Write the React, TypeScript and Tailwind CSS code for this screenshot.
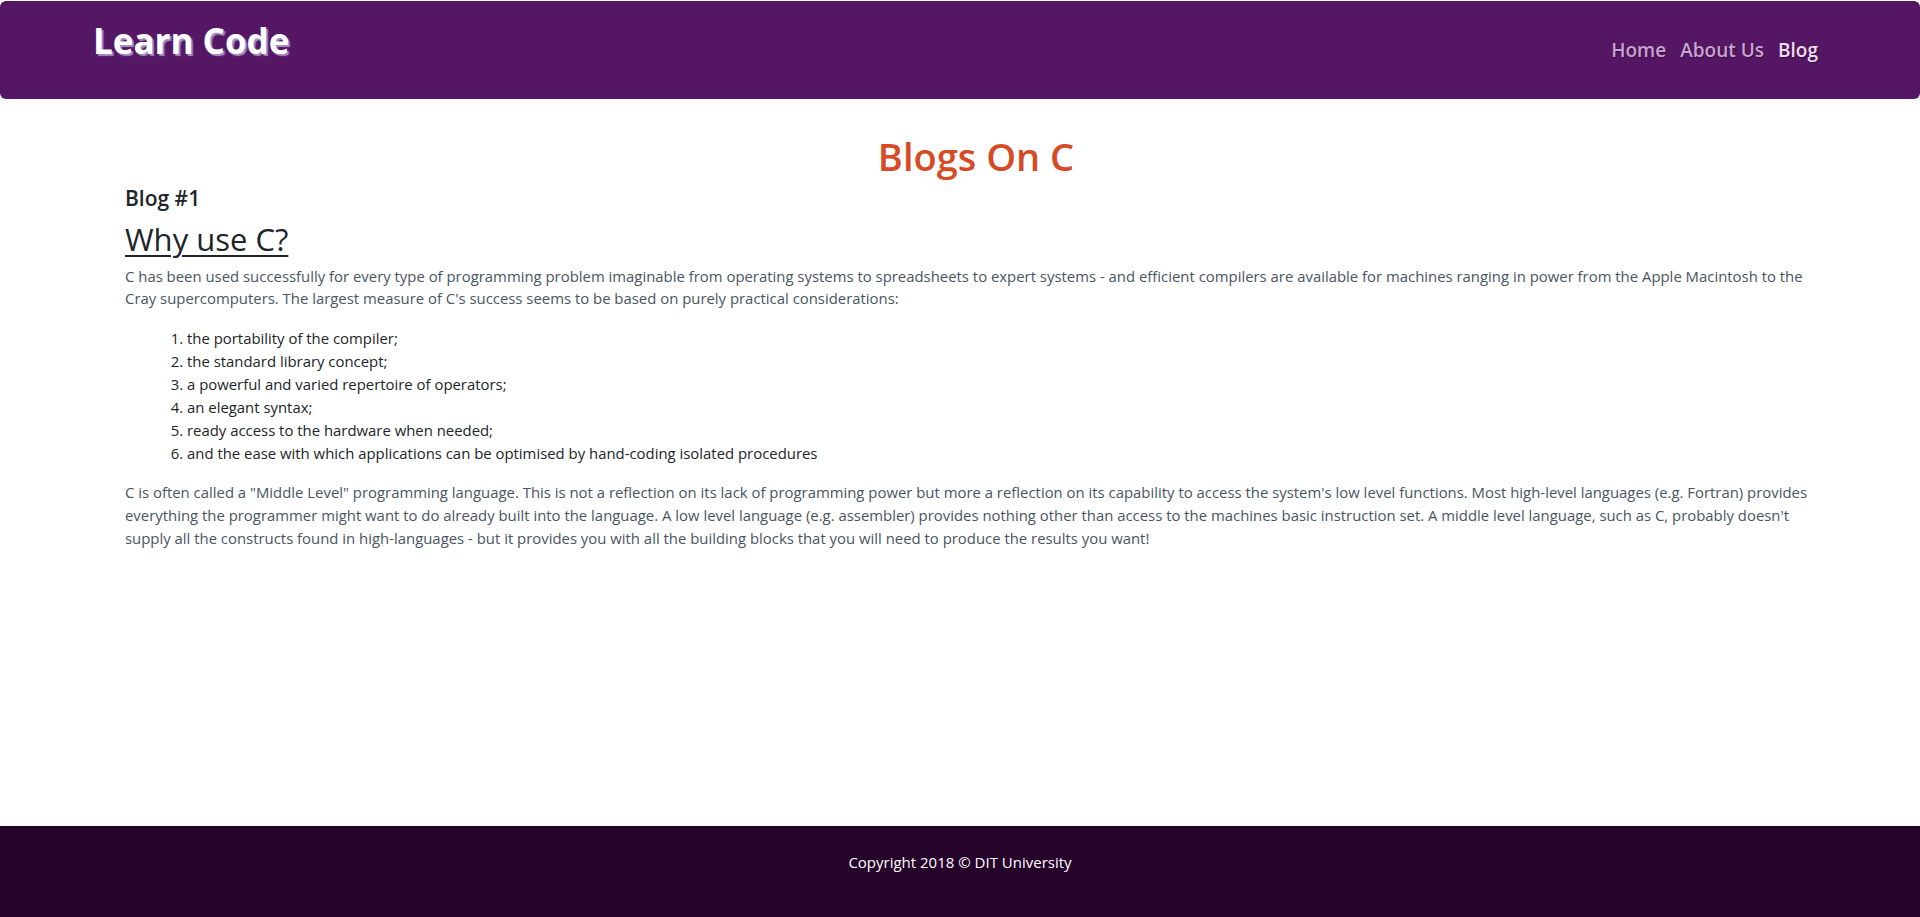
const points = [
  'the portability of the compiler;',
  'the standard library concept;',
  'a powerful and varied repertoire of operators;',
  'an elegant syntax;',
  'ready access to the hardware when needed;',
  'and the ease with which applications can be optimised by hand-coding isolated procedures',
];

function Header() {
  return (
    <header className="mt-px flex h-[98px] items-start justify-between rounded-[6px] bg-[#551763] pl-[93px] pr-[102px]">
      <h1 className="mt-[14px] text-[35px] font-bold text-white [text-shadow:2px_2px_1px_#a78fc4]">Learn Code</h1>
      <nav className="mt-[35px] flex gap-[14px] text-[19px] font-semibold [text-shadow:1px_1px_1px_#3b0c45]">
        <a className="text-[#c7a3d3]" href="#">Home</a>
        <a className="text-[#c7a3d3]" href="#">About Us</a>
        <a className="text-[#ecdff2]" href="#">Blog</a>
      </nav>
    </header>
  );
}

export default function App() {
  return (
    <div className="flex min-h-screen flex-col bg-white font-['Open_Sans',sans-serif]">
      <Header />
      <main className="pl-[125px] pr-[93px] pt-[35px]">
        <h2 className="text-center text-[38px] font-semibold leading-[1.2] text-[#d64b25]">Blogs On C</h2>
        <h3 className="mt-[6px] text-[21px] font-semibold leading-[1.2] text-[#212529]">Blog #1</h3>
        <h4 className="mt-[10px] text-[31px] leading-[1.2] text-[#212529] underline decoration-2 underline-offset-[4px]">
          Why use C?
        </h4>
        <p className="mt-[7px] text-[14.9px] leading-[22px] text-[#4a5563]">
          C has been used successfully for every type of programming problem imaginable from operating systems to
          spreadsheets to expert systems - and efficient compilers are available for machines ranging in power from the
          Apple Macintosh to the Cray supercomputers. The largest measure of C's success seems to be based on purely
          practical considerations:
        </p>
        <ol className="mt-[18px] list-decimal pl-[62px] text-[14.9px] leading-[23px] text-[#212529]">
          {points.map((p) => (
            <li key={p}>{p}</li>
          ))}
        </ol>
        <p className="mt-[16px] text-[14.9px] leading-[23px] text-[#4a5563]">
          C is often called a "Middle Level" programming language. This is not a reflection on its lack of programming
          power but more a reflection on its capability to access the system's low level functions. Most high-level
          languages (e.g. Fortran) provides everything the programmer might want to do already built into the language. A
          low level language (e.g. assembler) provides nothing other than access to the machines basic instruction set. A
          middle level language, such as C, probably doesn't supply all the constructs found in high-languages - but it
          provides you with all the building blocks that you will need to produce the results you want!
        </p>
      </main>
      <footer className="mt-auto flex h-[91px] items-center justify-center bg-[#25032a] pb-[18px] text-[15px] text-white">
        Copyright 2018 © DIT University
      </footer>
    </div>
  );
}
